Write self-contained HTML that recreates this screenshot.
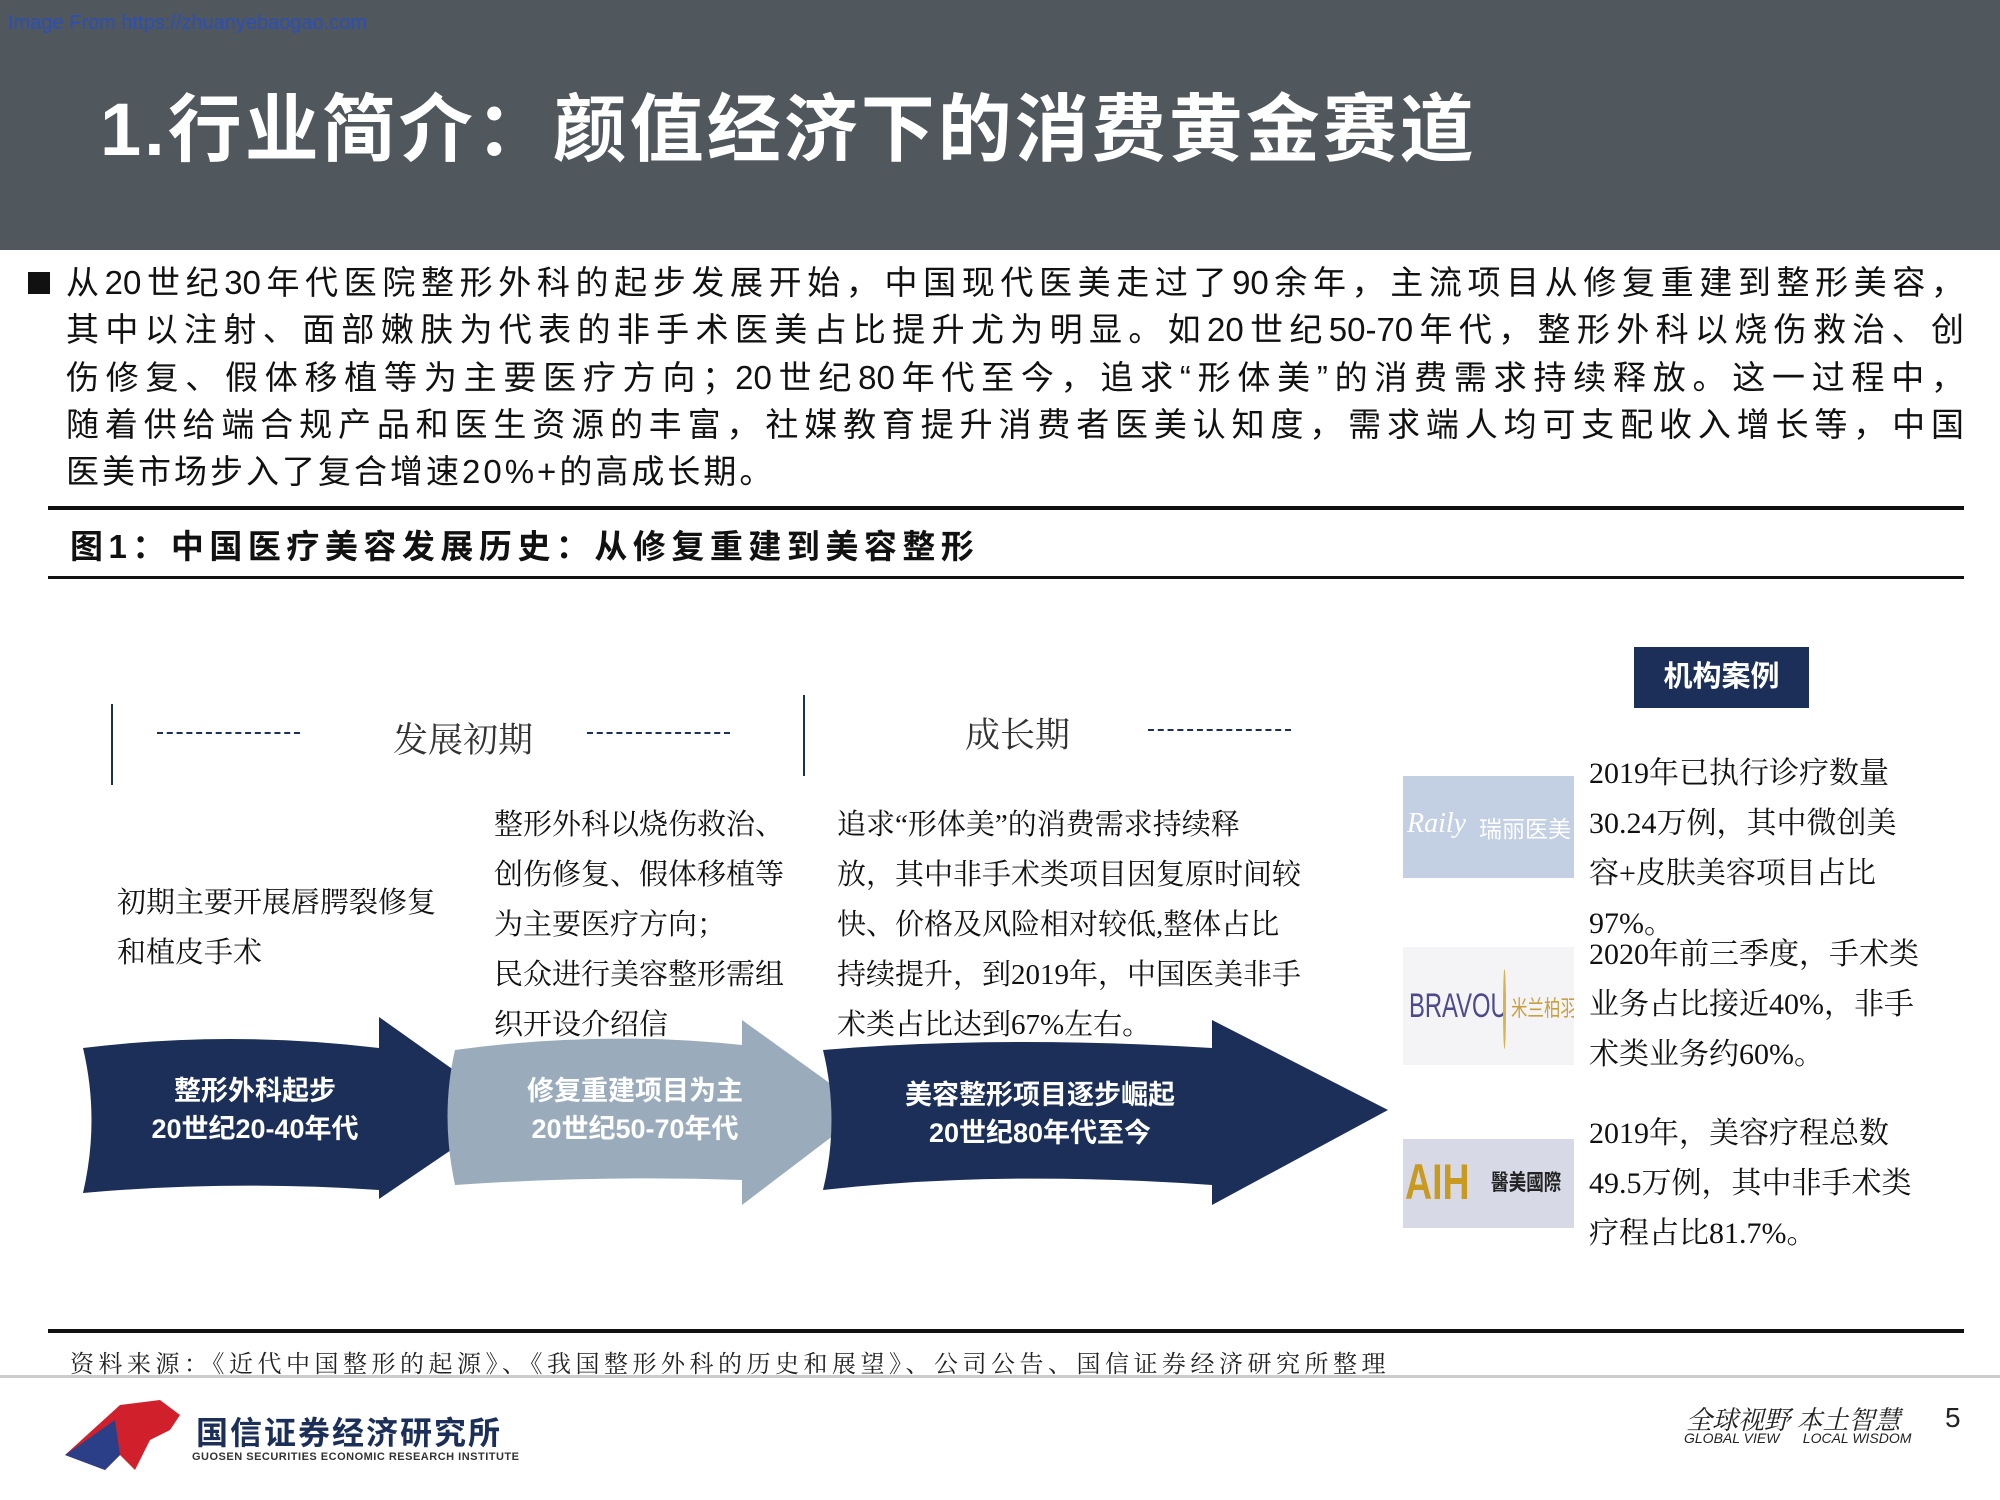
<!DOCTYPE html>
<html><head><meta charset="utf-8"><style>
*{margin:0;padding:0;box-sizing:border-box}
body{width:2000px;height:1500px;background:#fff;position:relative;overflow:hidden;font-family:"Liberation Sans","Noto Sans CJK SC",sans-serif;color:#111}
.a{position:absolute;white-space:nowrap}
.serif{font-family:"Liberation Serif","Noto Serif CJK SC",serif}
.hd{position:absolute;left:0;top:0;width:2000px;height:250px;background:#50575d}
.body p{position:absolute;left:66px;width:1898px;font-size:33px;line-height:47px;text-align:justify;text-align-last:justify;white-space:nowrap}
.body p.l{text-align-last:left;letter-spacing:3px}
.c{font-size:29px;line-height:50px;font-family:"Liberation Serif","Noto Serif CJK SC",serif;z-index:2}
.logo{position:absolute;overflow:hidden}
</style></head><body>
<div class="hd"></div>
<div class="a" style="left:8px;top:12px;font-size:20px;color:#2a4fb8">Image From https://zhuanyebaogao.com</div>
<div class="a" style="left:100px;top:70px;font-size:74px;font-weight:bold;color:#fff;letter-spacing:3px">1.行业简介：颜值经济下的消费黄金赛道</div>

<div class="a" style="left:28px;top:272px;width:22px;height:22px;background:#111"></div>
<div class="body">
<p style="top:259px">从20世纪30年代医院整形外科的起步发展开始，中国现代医美走过了90余年，主流项目从修复重建到整形美容，</p>
<p style="top:306px">其中以注射、面部嫩肤为代表的非手术医美占比提升尤为明显。如20世纪50-70年代，整形外科以烧伤救治、创</p>
<p style="top:354px">伤修复、假体移植等为主要医疗方向；20世纪80年代至今，追求“形体美”的消费需求持续释放。这一过程中，</p>
<p style="top:401px">随着供给端合规产品和医生资源的丰富，社媒教育提升消费者医美认知度，需求端人均可支配收入增长等，中国</p>
<p class="l" style="top:448px">医美市场步入了复合增速20%+的高成长期。</p>
</div>
<div class="a" style="left:48px;top:506px;width:1916px;height:4px;background:#111"></div>
<div class="a" style="left:70px;top:520px;font-size:33px;font-weight:bold;letter-spacing:5.5px">图1：中国医疗美容发展历史：从修复重建到美容整形</div>
<div class="a" style="left:48px;top:576px;width:1916px;height:3px;background:#111"></div>

<div class="a" style="left:1634px;top:647px;width:175px;height:61px;background:#1b2f58;color:#fff;font-size:29px;font-weight:bold;text-align:center;line-height:61px" >机构案例</div>

<div class="a" style="left:111px;top:704px;width:2px;height:81px;background:#1b2f58"></div>
<div class="a" style="left:803px;top:695px;width:2px;height:81px;background:#1b2f58"></div>
<div class="a" style="left:157px;top:732px;width:143px;border-top:2px dashed #1b2f58"></div>
<div class="a" style="left:587px;top:732px;width:143px;border-top:2px dashed #1b2f58"></div>
<div class="a" style="left:1148px;top:729px;width:143px;border-top:2px dashed #1b2f58"></div>
<div class="a serif" style="left:393px;top:713px;font-size:35px;color:#333">发展初期</div>
<div class="a serif" style="left:965px;top:708px;font-size:35px;color:#333">成长期</div>

<svg class="a" style="left:0;top:0" width="2000" height="1500">
<path d="M83 1048 Q230 1030 379 1048 L379 1017 L510 1110 L379 1199 L379 1190 Q230 1180 83 1193 Q100 1120 83 1048Z" fill="#1b2f58"/>
<path d="M455 1050 Q600 1030 742 1045 L742 1020 L867 1110 L742 1205 L742 1180 Q600 1175 455 1185 Q440 1115 455 1050Z" fill="#9aabbc"/>
<path d="M823 1050 Q1000 1035 1212 1048 L1212 1020 L1388 1110 L1212 1205 L1212 1185 Q1000 1170 823 1190 Q840 1120 823 1050Z" fill="#1b2f58"/>
</svg>
<div class="a c" style="left:117px;top:878px">初期主要开展唇腭裂修复<br>和植皮手术</div>
<div class="a c" style="left:494px;top:800px">整形外科以烧伤救治、<br>创伤修复、假体移植等<br>为主要医疗方向；<br>民众进行美容整形需组<br>织开设介绍信</div>
<div class="a c" style="left:837px;top:800px">追求“形体美”的消费需求持续释<br>放，其中非手术类项目因复原时间较<br>快、价格及风险相对较低,整体占比<br>持续提升，到2019年，中国医美非手<br>术类占比达到67%左右。</div>
<div class="a" style="left:130px;top:1072px;width:250px;text-align:center;color:#fff;font-size:27px;font-weight:bold;line-height:38px">整形外科起步<br>20世纪20-40年代</div>
<div class="a" style="left:510px;top:1072px;width:250px;text-align:center;color:#fff;font-size:27px;font-weight:bold;line-height:38px">修复重建项目为主<br>20世纪50-70年代</div>
<div class="a" style="left:900px;top:1076px;width:280px;text-align:center;color:#fff;font-size:27px;font-weight:bold;line-height:38px">美容整形项目逐步崛起<br>20世纪80年代至今</div>

<div class="logo" style="left:1403px;top:776px;width:171px;height:102px;background:#c3cfe2">
<div class="a serif" style="left:4px;top:32px;font-size:28px;color:#fff;font-style:italic">Raily</div>
<div class="a" style="left:76px;top:34px;font-size:23px;color:#fff">瑞丽医美</div></div>
<div class="logo" style="left:1403px;top:947px;width:171px;height:118px;background:#f4f3f6">
<div class="a" style="left:6px;top:40px;font-size:34px;color:#4c4a8a;transform:scaleX(.7);transform-origin:left">BRAVOU</div>
<div class="a" style="left:100px;top:22px;width:3px;height:80px;border-radius:50%;border-right:3px solid #d8b450"></div>
<div class="a" style="left:108px;top:44px;font-size:22px;color:#c8a040;transform:scaleX(.75);transform-origin:left">米兰柏羽</div></div>
<div class="logo" style="left:1403px;top:1139px;width:171px;height:89px;background:#d7d9e6">
<div class="a" style="left:2px;top:14px;font-size:50px;color:#c89a20;font-weight:bold;transform:scaleX(.75);transform-origin:left">AIH</div>
<div class="a" style="left:88px;top:26px;font-size:22px;color:#222;font-weight:bold;transform:scaleX(.8);transform-origin:left">醫美國際</div></div>

<div class="a c" style="left:1589px;top:749px;font-size:30px">2019年已执行诊疗数量<br>30.24万例，其中微创美<br>容+皮肤美容项目占比<br>97%。</div>
<div class="a c" style="left:1589px;top:930px;font-size:30px">2020年前三季度，手术类<br>业务占比接近40%，非手<br>术类业务约60%。</div>
<div class="a c" style="left:1589px;top:1109px;font-size:30px">2019年，美容疗程总数<br>49.5万例，其中非手术类<br>疗程占比81.7%。</div>

<div class="a" style="left:48px;top:1329px;width:1916px;height:4px;background:#111"></div>
<div class="a serif" style="left:70px;top:1344px;font-size:24px;color:#222;letter-spacing:4.5px">资料来源：《近代中国整形的起源》、《我国整形外科的历史和展望》、公司公告、国信证券经济研究所整理</div>
<div class="a" style="left:0;top:1375px;width:2000px;height:3px;background:#ccc"></div>

<svg class="a" style="left:60px;top:1395px" width="130" height="80">
<path d="M60 10 L100 5 L120 20 L110 35 L90 45 L75 75 L60 60 L45 75 L5 60 Z" fill="#d0202c"/>
<path d="M5 60 L55 25 L60 60 L45 75 Z" fill="#2b3f88"/>
</svg>
<div class="a" style="left:196px;top:1408px;font-size:32px;font-weight:bold;color:#1b2f58;letter-spacing:2px">国信证券经济研究所</div>
<div class="a" style="left:192px;top:1451px;font-size:11px;font-weight:bold;color:#333;letter-spacing:.5px">GUOSEN SECURITIES ECONOMIC RESEARCH INSTITUTE</div>
<div class="a serif" style="left:1686px;top:1400px;font-size:26px;font-style:italic;color:#222">全球视野 本土智慧</div>
<div class="a" style="left:1684px;top:1430px;font-size:14px;font-style:italic;color:#222">GLOBAL VIEW&nbsp;&nbsp;&nbsp;&nbsp;&nbsp;&nbsp;LOCAL WISDOM</div>
<div class="a" style="left:1945px;top:1402px;font-size:28px;color:#222">5</div>
</body></html>
